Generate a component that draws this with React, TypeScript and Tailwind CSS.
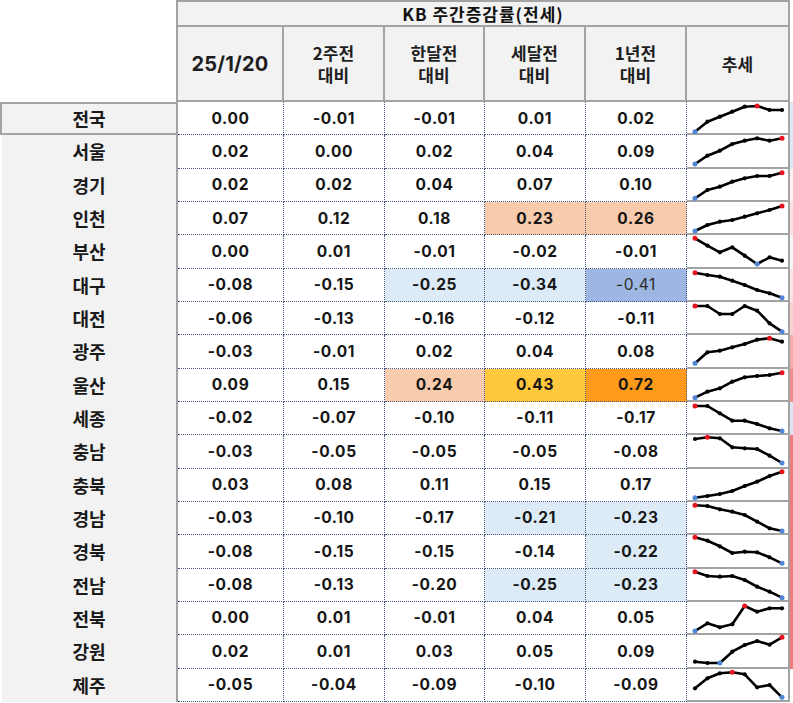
const num = "font-['Inter','Noto_Sans_CJK_KR',sans-serif]";
const kr = "font-['Noto_Sans_CJK_KR','Noto_Sans',sans-serif]";

const PEACH = '#f8cbad';
const LBLUE = '#ddebf7';
const MBLUE = '#9db6e2';
const YELLOW = '#ffc83d';
const ORANGE = '#ff9a1a';

type Row = {
  name: string;
  v: string[];
  bg?: (string | null)[];
  pts: number[];
  hi: number;
  lo: number;
  strip: string;
};

const rows: Row[] = [
  { name: '전국', v: ['0.00', '-0.01', '-0.01', '0.01', '0.02'], pts: [29.7, 19.7, 14.7, 9.7, 4.7, 4, 8, 8], lo: 0, hi: 5, strip: '#dde9f7' },
  { name: '서울', v: ['0.02', '0.00', '0.02', '0.04', '0.09'], pts: [29, 20.7, 15.7, 9, 5.7, 3.3, 5.7, 3.3], lo: 0, hi: 7, strip: '#dde9f7' },
  { name: '경기', v: ['0.02', '0.02', '0.04', '0.07', '0.10'], pts: [29.3, 21, 17.7, 12.7, 9.3, 7, 7, 3.7], lo: 0, hi: 7, strip: '#fcf1f1' },
  { name: '인천', v: ['0.07', '0.12', '0.18', '0.23', '0.26'], bg: [null, null, null, PEACH, PEACH], pts: [29, 23, 19.7, 18, 14.7, 11.3, 8, 4], lo: 0, hi: 7, strip: '#fbe2e2' },
  { name: '부산', v: ['0.00', '0.01', '-0.01', '-0.02', '-0.01'], pts: [3.3, 10.7, 17.3, 12.3, 20.7, 29, 22.3, 25.7], lo: 5, hi: 0, strip: '#f4f6fc' },
  { name: '대구', v: ['-0.08', '-0.15', '-0.25', '-0.34', '-0.41'], bg: [null, null, LBLUE, LBLUE, MBLUE], pts: [3.7, 6, 7.7, 11.7, 16, 21, 24.3, 28.7], lo: 7, hi: 0, strip: '#fbe4e4' },
  { name: '대전', v: ['-0.06', '-0.13', '-0.16', '-0.12', '-0.11'], pts: [4, 4, 12, 12, 4, 8.7, 21.3, 29.7], lo: 7, hi: 0, strip: '#f9d2d2' },
  { name: '광주', v: ['-0.03', '-0.01', '0.02', '0.04', '0.08'], pts: [28.3, 17.3, 15.7, 12.3, 9, 4.7, 3.3, 6.7], lo: 0, hi: 6, strip: '#f7aaaa' },
  { name: '울산', v: ['0.09', '0.15', '0.24', '0.43', '0.72'], bg: [null, null, PEACH, YELLOW, ORANGE], pts: [28.7, 22.7, 19.3, 12.7, 8.3, 7, 6, 3.7], lo: 0, hi: 7, strip: '#f38c8c' },
  { name: '세종', v: ['-0.02', '-0.07', '-0.10', '-0.11', '-0.17'], pts: [4, 4, 11.3, 18.7, 18.7, 22, 26.3, 29], lo: 7, hi: 0, strip: '#dfe3f6' },
  { name: '충남', v: ['-0.03', '-0.05', '-0.05', '-0.05', '-0.08'], pts: [4, 2.3, 3.3, 12.3, 13.3, 14, 20.7, 28], lo: 7, hi: 1, strip: '#f27c7c' },
  { name: '충북', v: ['0.03', '0.08', '0.11', '0.15', '0.17'], pts: [28.7, 27, 25, 22, 17, 12.7, 7, 2.7], lo: 0, hi: 7, strip: '#f27c7c' },
  { name: '경남', v: ['-0.03', '-0.10', '-0.17', '-0.21', '-0.23'], bg: [null, null, null, LBLUE, LBLUE], pts: [3.3, 4, 7.3, 9.7, 13, 19.7, 26.3, 29], lo: 7, hi: 0, strip: '#f27c7c' },
  { name: '경북', v: ['-0.08', '-0.15', '-0.15', '-0.14', '-0.22'], bg: [null, null, null, null, LBLUE], pts: [2.3, 5.7, 11.3, 18, 16.7, 17.3, 22.3, 28.3], lo: 7, hi: 0, strip: '#f27c7c' },
  { name: '전남', v: ['-0.08', '-0.13', '-0.20', '-0.25', '-0.23'], bg: [null, null, null, LBLUE, LBLUE], pts: [2.7, 7, 7.7, 7, 11, 17.7, 22.7, 28.7], lo: 7, hi: 0, strip: '#f27c7c' },
  { name: '전북', v: ['0.00', '0.01', '-0.01', '0.04', '0.05'], pts: [29, 21.3, 25.3, 22.3, 4, 9.7, 6.3, 6.3], lo: 0, hi: 4, strip: '#f27c7c' },
  { name: '강원', v: ['0.02', '0.01', '0.03', '0.05', '0.09'], pts: [26.7, 28, 28, 16.7, 10, 6, 9.7, 2.3], lo: 2, hi: 7, strip: '#f27c7c' },
  { name: '제주', v: ['-0.05', '-0.04', '-0.09', '-0.10', '-0.09'], pts: [19.3, 9.3, 4.3, 3.3, 5.3, 18.3, 16, 28.3], lo: 7, hi: 3, strip: '#ffffff' },
];

const colW = ['w-[106px]', 'w-[101px]', 'w-[100px]', 'w-[101px]', 'w-[101px]'];

function Spark({ pts, hi, lo }: { pts: number[]; hi: number; lo: number }) {
  const xs = pts.map((_, i) => 8 + i * (87 / 7));
  const d = pts.map((y, i) => `${i ? 'L' : 'M'}${xs[i].toFixed(1)} ${y}`).join(' ');
  return (
    <svg width="101" height="31" viewBox="0 0 101 31" className="block overflow-visible">
      <path d={d} fill="none" stroke="#000" strokeWidth="2.6" strokeLinejoin="round" />
      {pts.map((y, i) => (
        <circle
          key={i}
          cx={xs[i]}
          cy={y}
          r={i === hi || i === lo ? 2.5 : 2.1}
          fill={i === hi ? '#e8141b' : i === lo ? '#4f86d6' : '#000'}
        />
      ))}
    </svg>
  );
}

function HeaderCell({ w, lines }: { w: string; lines: string[] }) {
  return (
    <div
      className={`${w} flex shrink-0 flex-col items-center justify-center border-r-2 border-b-2 border-[#a3a3a3] bg-[#f2f2f2] text-[17px] font-bold text-[#1e1e1e] ${kr}`}
    >
      {lines.map((l) => (
        <div key={l} className="leading-[22px]">
          {l}
        </div>
      ))}
    </div>
  );
}

export default function App() {
  return (
    <div className="h-[703px] w-[793px] overflow-hidden bg-white">
      <div className="flex h-[102px]">
        <div className="w-[176px] shrink-0" />
        <div className="flex w-[614px] flex-col border-t-2 border-l-2 border-[#a3a3a3]">
          <div
            className={`flex h-[25px] items-center justify-center border-r-2 border-b-2 border-[#a3a3a3] bg-[#f2f2f2] text-[17px] font-bold tracking-[1px] text-[#111] ${kr}`}
          >
            KB 주간증감률(전세)
          </div>
          <div className="flex h-[75px]">
            <div
              className={`flex w-[106px] shrink-0 items-center justify-center border-r-2 border-b-2 border-[#a3a3a3] bg-[#f2f2f2] text-[20px] font-bold tracking-[0.2px] text-[#1e1e1e] ${num}`}
            >
              25/1/20
            </div>
            <HeaderCell w="w-[101px]" lines={['2주전', '대비']} />
            <HeaderCell w="w-[100px]" lines={['한달전', '대비']} />
            <HeaderCell w="w-[101px]" lines={['세달전', '대비']} />
            <HeaderCell w="w-[101px]" lines={['1년전', '대비']} />
            <HeaderCell w="w-[103px]" lines={['추세']} />
          </div>
        </div>
      </div>

      <div className="flex h-[600px] flex-col">
        {rows.map((r, ri) => (
          <div key={r.name} className="flex flex-1">
            <div className="flex w-[178px] shrink-0 border-r-2 border-[#a3a3a3]">
              <div
                className={`flex flex-1 items-center justify-center bg-[#f2f2f2] text-[18px] font-bold text-[#1a1a1a] ${kr} ${
                  ri === 0 ? 'border-2 border-r-0 border-[#a3a3a3]' : 'ml-[2px]'
                }`}
              >
                {r.name}
              </div>
            </div>
            {r.v.map((val, ci) => {
              const bg = r.bg?.[ci];
              const light = bg === MBLUE;
              return (
                <div
                  key={ci}
                  style={bg ? { backgroundColor: bg } : undefined}
                  className={`${colW[ci]} flex shrink-0 items-center justify-center border-r border-b border-dotted border-[#4b5680] text-[15.5px] tracking-[0.6px] ${num} ${
                    light ? 'font-normal text-[#2a2a2a]' : 'font-bold text-[#161616]'
                  }`}
                >
                  {val}
                </div>
              );
            })}
            <div className="flex w-[103px] shrink-0 items-center border-r-2 border-b-2 border-[#a3a3a3]">
              <Spark pts={r.pts} hi={r.hi} lo={r.lo} />
            </div>
            <div className="w-[3px] shrink-0" style={{ backgroundColor: r.strip }} />
          </div>
        ))}
      </div>
    </div>
  );
}
